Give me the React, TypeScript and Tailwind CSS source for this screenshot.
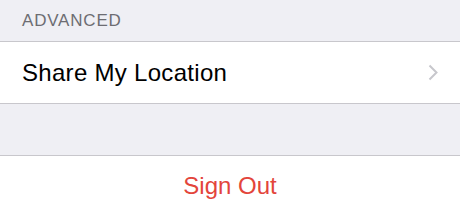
import React from 'react';

const SettingsFooter: React.FC = () => {
  return (
    <div
      className="w-[460px] h-[216px] overflow-hidden bg-[#efeff4]"
      style={{ fontFamily: '"Liberation Sans", Arial, sans-serif' }}
    >
      <div className="h-[41px] flex items-center px-[22px] pt-[1px]">
        <span className="text-[17px] leading-[20px] tracking-[0.8px] text-[#6d6d72]">ADVANCED</span>
      </div>

      <button className="w-full h-[63px] bg-white border-y border-[#c8c7cc] flex items-center justify-between pl-[22px] pr-[21px]">
        <span className="text-[24px] leading-[28px] tracking-[0.3px] text-black">Share My Location</span>
        <svg width="11" height="17" viewBox="0 0 11 17" fill="none">
          <path d="M1.5 1.5 L8.5 8.5 L1.5 15.5" stroke="#c7c7cc" strokeWidth="2" />
        </svg>
      </button>

      <div className="h-[51px]" />

      <button className="w-full h-[61px] bg-white border-t border-[#c8c7cc] flex items-center justify-center">
        <span className="text-[24px] leading-[28px] text-[#e3453b]">Sign Out</span>
      </button>
    </div>
  );
};

export default function App() {
  return <SettingsFooter />;
}
